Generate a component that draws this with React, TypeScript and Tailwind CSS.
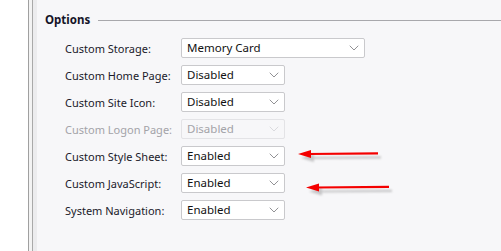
import { ChevronDown } from 'lucide-react'

const rows = [
  { label: 'Custom Storage:', value: 'Memory Card', wide: true },
  { label: 'Custom Home Page:', value: 'Disabled' },
  { label: 'Custom Site Icon:', value: 'Disabled' },
  { label: 'Custom Logon Page:', value: 'Disabled', disabled: true },
  { label: 'Custom Style Sheet:', value: 'Enabled' },
  { label: 'Custom JavaScript:', value: 'Enabled' },
  { label: 'System Navigation:', value: 'Enabled' },
]

function Select({ value, wide, disabled }: { value: string; wide?: boolean; disabled?: boolean }) {
  return (
    <div
      className={`flex items-center justify-between h-[20px] pl-[5px] pr-[2px] rounded-[2px] border ${
        wide ? 'w-[184px]' : 'w-[104px]'
      } ${disabled ? 'bg-[#f7f7f9] border-[#e3e3e6] text-[#a3a3a8]' : 'bg-white border-[#c9c9cc] text-[#111]'}`}
    >
      <span className="text-[11.5px] leading-none whitespace-nowrap">{value}</span>
      <ChevronDown
        className={`w-[16px] h-[16px] ${disabled ? 'text-[#cfcfd3]' : 'text-[#6a6a6e]'}`}
        strokeWidth={1.1}
      />
    </div>
  )
}

function Arrow({ x1, x2, y }: { x1: number; x2: number; y: number }) {
  return (
    <g>
      <g transform="translate(3 4)" opacity="0.3" filter="url(#blur)">
        <line x1={x1 + 10} y1={y} x2={x2} y2={y - 0.7} stroke="#555" strokeWidth="2.2" />
        <polygon points={`${x1},${y} ${x1 + 13},${y - 4} ${x1 + 13},${y + 4}`} fill="#555" />
      </g>
      <line x1={x1 + 10} y1={y} x2={x2} y2={y - 0.7} stroke="#f40000" strokeWidth="2.2" />
      <polygon points={`${x1},${y} ${x1 + 13},${y - 4} ${x1 + 13},${y + 4}`} fill="#f40000" />
    </g>
  )
}

export default function App() {
  return (
    <div
      className="relative w-[501px] h-[251px] flex bg-white overflow-hidden"
      style={{ fontFamily: '"Noto Sans", "Open Sans", sans-serif' }}
    >
      <div className="w-[28px] bg-white" />
      <div className="w-px bg-[#a0a0a0]" />
      <div className="w-[3px] bg-[#f3f3f3]" />
      <div className="w-px bg-[#a9a9a9]" />
      <div className="w-[4px] bg-[#ececee]" />

      <div className="flex-1 bg-[#f7f7f9] pt-[11px] pl-[8px]">
        {/* Group header */}
        <div className="flex items-center h-[18px]">
          <span className="text-[11.5px] font-bold text-[#141428] leading-none">Options</span>
          <div className="flex-1 h-px bg-[#a8a8ac] ml-[8px]" />
        </div>

        <div className="mt-[9px] pl-[20px] flex flex-col gap-[7px]">
          {rows.map(r => (
            <div key={r.label} className="flex items-center h-[20px]">
              <span
                className={`w-[116px] text-[11px] leading-none whitespace-nowrap ${
                  r.disabled ? 'text-[#a3a3a8]' : 'text-[#1a1a2a]'
                }`}
              >
                {r.label}
              </span>
              <Select value={r.value} wide={r.wide} disabled={r.disabled} />
            </div>
          ))}
        </div>
      </div>

      {/* annotation arrows */}
      <svg className="absolute inset-0 pointer-events-none" width="501" height="251">
        <defs>
          <filter id="blur" x="-10%" y="-100%" width="120%" height="300%">
            <feGaussianBlur stdDeviation="1.2" />
          </filter>
        </defs>
        <Arrow x1={298} x2={378} y={154} />
        <Arrow x1={306} x2={389} y={187.5} />
      </svg>
    </div>
  )
}
